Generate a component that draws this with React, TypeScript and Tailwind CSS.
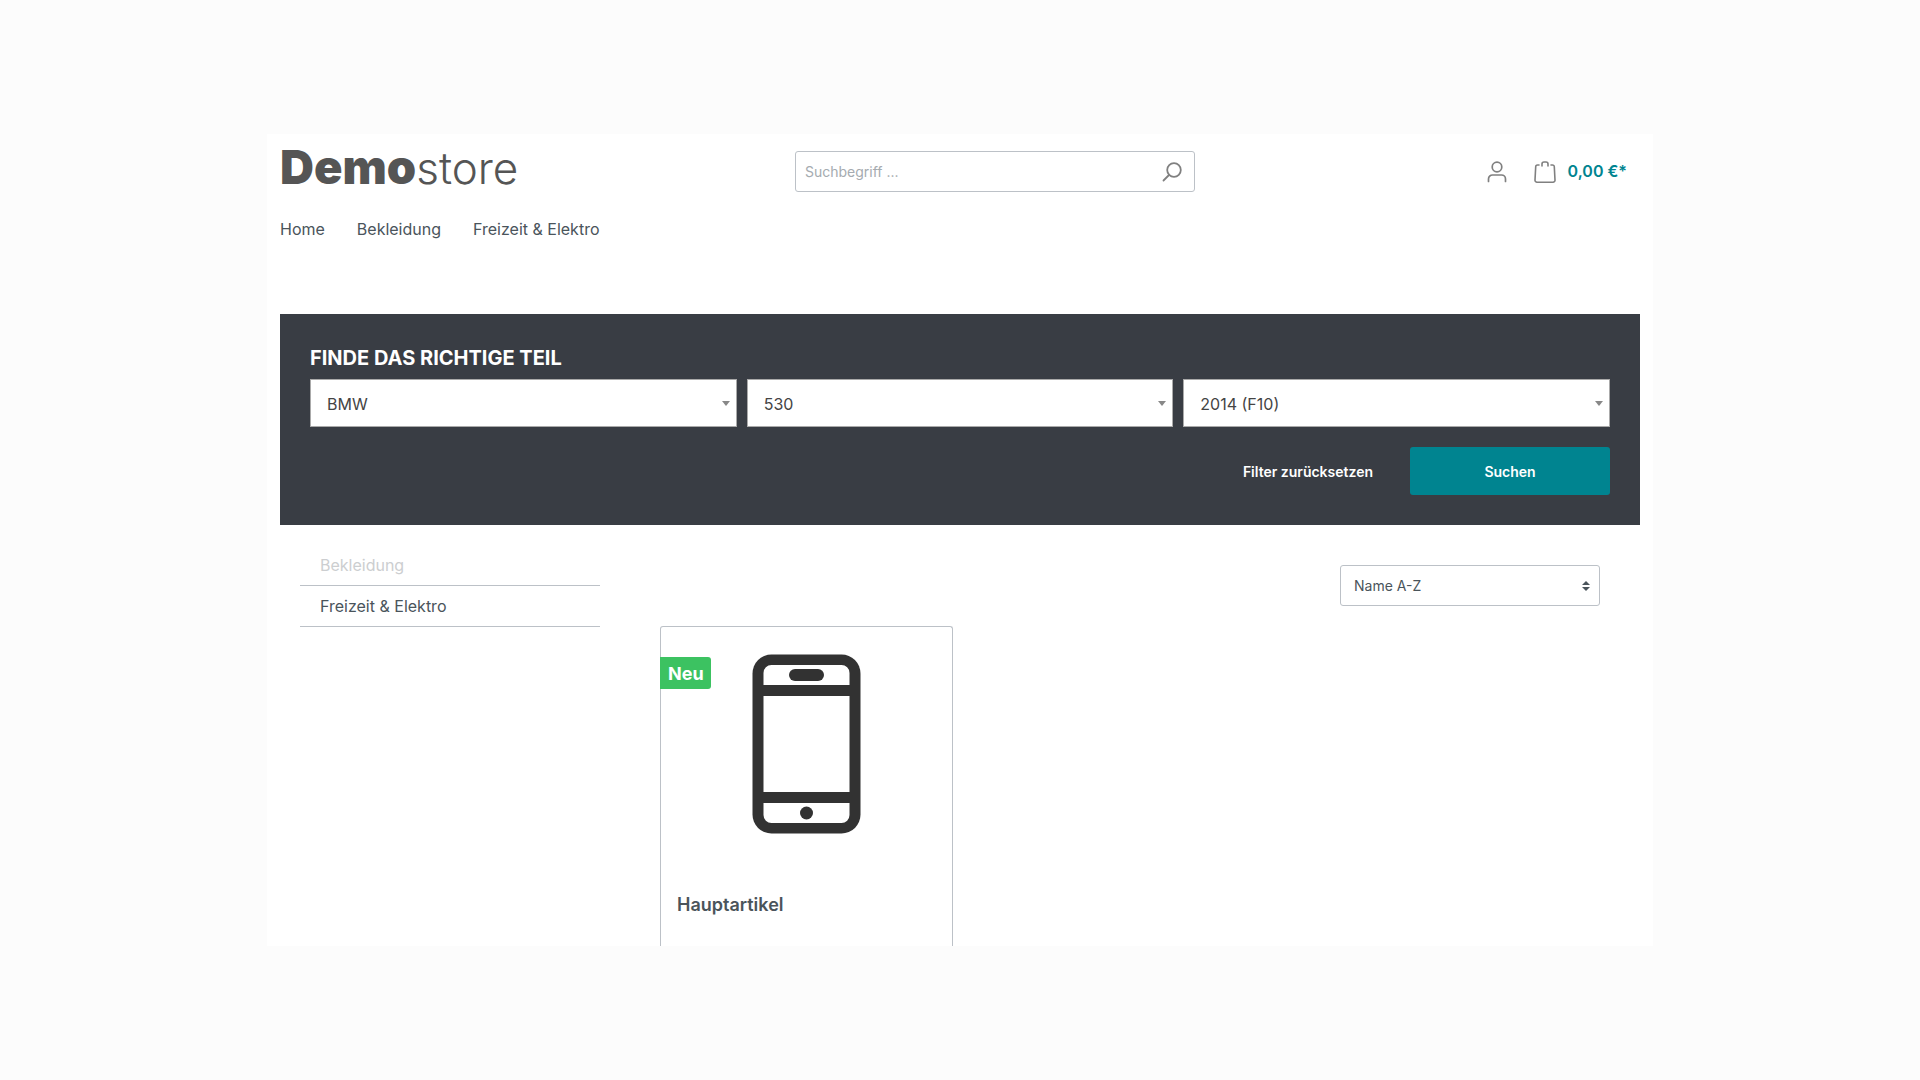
import React, { useState } from 'react';

const navItems = ['Home', 'Bekleidung', 'Freizeit & Elektro'];

const categories = [
  { label: 'Bekleidung', muted: true },
  { label: 'Freizeit & Elektro', muted: false },
];

const SearchIcon = () => (
  <svg className="w-5 h-5" viewBox="0 0 20 20" fill="none" stroke="#808080" strokeWidth="1.8" strokeLinecap="round">
    <circle cx="12" cy="8" r="6.8" />
    <path d="M7 13L1.500 18.500" />
  </svg>
);

const AccountIcon = () => (
  <svg className="w-5 h-[22px]" viewBox="0 0 20 22" fill="none" stroke="#808080" strokeWidth="1.7" strokeLinecap="round">
    <circle cx="10" cy="6" r="4.8" />
    <path d="M1.500 20.500V18a4 4 0 0 1 4-4h9a4 4 0 0 1 4 4v2.500" />
  </svg>
);

const BagIcon = () => (
  <svg className="w-[22px] h-[22px]" viewBox="0 0 22 22" fill="none" stroke="#808080" strokeWidth="1.6" strokeLinecap="round">
    <path d="M5 4H3.500a1.800 1.800 0 0 0-1.800 1.800L1 19a2 2 0 0 0 2 2.200h16a2 2 0 0 0 2-2.200l-.7-13.200A1.800 1.800 0 0 0 18.500 4H17" />
    <path d="M8 5V3a2 2 0 0 1 2-2h2a2 2 0 0 1 2 2v2" />
  </svg>
);

const PhoneImage = () => (
  <svg className="w-[109px] h-[180px]" viewBox="0 0 109 180" role="img" aria-label="Hauptartikel">
    <rect x="0.500" y="0.500" width="108" height="179" rx="19" fill="#323232" />
    <path d="M11.500 31V19a8 8 0 0 1 8-8h70a8 8 0 0 1 8 8v12z" fill="#fff" />
    <rect x="11.500" y="42" width="86" height="96" fill="#fff" />
    <path d="M11.500 149h86v12a8 8 0 0 1-8 8h-70a8 8 0 0 1-8-8z" fill="#fff" />
    <rect x="37" y="15" width="35" height="12" rx="6" fill="#323232" />
    <circle cx="54.500" cy="159" r="6.500" fill="#323232" />
  </svg>
);

interface FilterSelectProps {
  label: string;
  options: string[];
}

function FilterSelect({ label, options }: FilterSelectProps) {
  return (
    <div className="relative">
      <select
        aria-label={label}
        className="block w-full h-12 pt-px pl-4 pr-8 appearance-none bg-white border border-[#aaa] text-base text-[#444]"
      >
        {options.map((option) => (
          <option key={option}>{option}</option>
        ))}
      </select>
      <svg className="absolute right-[7px] top-[22px] w-2 h-[5px] pointer-events-none" viewBox="0 0 8 5" fill="#888">
        <path d="M0 0h8L4 5z" />
      </svg>
    </div>
  );
}

export default function App() {
  const [search, setSearch] = useState('');

  return (
    <div className="min-h-screen bg-[#fcfcfc] py-[134px] text-[#4a545b] font-[Inter,sans-serif]">
      <div className="flex flex-col w-full max-w-[1386px] h-[calc(100vh-268px)] mx-auto px-[13px] bg-white overflow-hidden">
        <header className="grid grid-cols-[515fr_400fr_445fr] items-center pt-[17px]">
          <a href="#" className="flex items-baseline self-start leading-8 text-[#555]">
            <span className="text-[47px] font-black">Demo</span>
            <span className="text-[44px] font-light">store</span>
          </a>
          <form
            className="flex items-center h-[41px] border border-[#bcc1c7] rounded-[3px]"
            onSubmit={(e) => e.preventDefault()}
          >
            <input
              type="search"
              aria-label="Suchbegriff"
              placeholder="Suchbegriff ..."
              value={search}
              onChange={(e) => setSearch(e.target.value)}
              className="flex-1 min-w-0 h-full pl-[9px] text-sm outline-none placeholder:text-[#a5abb0]"
            />
            <button type="submit" aria-label="Suchen" className="px-3">
              <SearchIcon />
            </button>
          </form>
          <div className="flex items-center justify-end pr-[13px]">
            <button aria-label="Mein Konto" className="mr-[27px]">
              <AccountIcon />
            </button>
            <a href="#" className="flex items-center gap-3 font-semibold text-[#008490]">
              <BagIcon />
              <span className="pb-0.5">0,00 €*</span>
            </a>
          </div>
        </header>

        <nav className="flex gap-8 mt-[25px] text-base">
          {navItems.map((item) => (
            <a key={item} href="#">{item}</a>
          ))}
        </nav>

        <section className="mt-[73px] px-[30px] pt-[29px] pb-[30px] bg-[#393d44]">
          <h2 className="mb-[6px] text-xl leading-[30px] font-bold text-white uppercase">Finde das richtige Teil</h2>
          <div className="grid grid-cols-3 gap-[10px]">
            <FilterSelect label="Marke" options={['BMW']} />
            <FilterSelect label="Modell" options={['530']} />
            <FilterSelect label="Baujahr" options={['2014 (F10)']} />
          </div>
          <div className="flex justify-end mt-5 text-sm font-semibold text-white">
            <button type="reset" className="h-12 px-[37px] pt-0.5">Filter zurücksetzen</button>
            <button type="submit" className="w-[200px] h-12 pt-0.5 rounded-[3px] bg-[#008490]">Suchen</button>
          </div>
        </section>

        <div className="flex flex-1 gap-[60px] pl-5 pr-10">
          <aside className="w-[300px] pt-5">
            <ul>
              {categories.map((category) => (
                <li key={category.label} className="border-b border-[#bcc1c7]">
                  <a
                    href="#"
                    className={`block px-5 py-2 text-base ${category.muted ? 'text-[#ccced0]' : ''}`}
                  >
                    {category.label}
                  </a>
                </li>
              ))}
            </ul>
          </aside>

          <main className="flex flex-col flex-1 gap-5 pt-10">
            <div className="relative self-end w-[260px]">
              <select
                aria-label="Sortierung"
                className="block w-full h-[41px] pl-[13px] pr-8 appearance-none bg-white border border-[#bcc1c7] rounded-[3px] text-sm"
              >
                <option>Name A-Z</option>
                <option>Name Z-A</option>
              </select>
              <svg className="absolute right-[10px] top-4 w-2 h-[10px] pointer-events-none" viewBox="0 0 8 10" fill="#4a545b">
                <path d="M0 4h8L4 0zM0 6h8L4 10z" />
              </svg>
            </div>

            <div className="grid flex-1 grid-cols-3 gap-[30px]">
              <article className="relative flex flex-col pt-[27px] border border-b-0 border-[#bcc1c7] rounded-t-[3px]">
                <span className="absolute -left-px top-[30px] h-8 pl-2 pr-[7px] text-lg leading-[34px] font-bold text-white bg-[#3cc261] rounded-r-[3px]">
                  Neu
                </span>
                <div className="flex justify-center">
                  <PhoneImage />
                </div>
                <h3 className="mt-[57px] px-4 text-lg font-semibold">
                  <a href="#">Hauptartikel</a>
                </h3>
              </article>
            </div>
          </main>
        </div>
      </div>
    </div>
  );
}
